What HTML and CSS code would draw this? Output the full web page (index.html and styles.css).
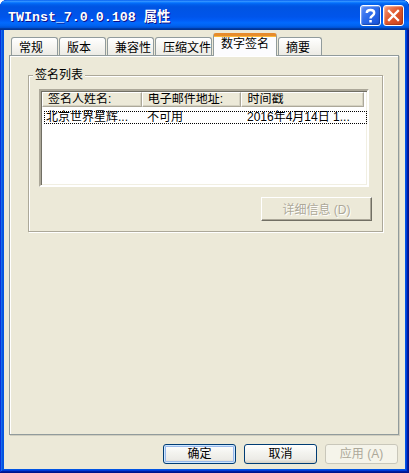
FILE: index.html
```html
<!DOCTYPE html>
<html lang="zh-CN">
<head>
<meta charset="utf-8">
<title>TWInst_7.0.0.108 属性</title>
<link rel="stylesheet" href="styles.css">
</head>
<body>
<div class="window">
  <div class="titlebar">
    <span class="title">TWInst_7.0.0.108 属性</span>
    <div class="tcontrols">
      <div class="tbtn help">
        <svg width="21" height="21" viewBox="0 0 21 21"><path d="M6.8 8 C6.8 4 14.2 4 14.2 8 C14.2 10.8 10.5 10.6 10.5 13.5" fill="none" stroke="#fff" stroke-width="2.4"/><rect x="9.3" y="15" width="2.5" height="2.5" fill="#fff"/></svg>
      </div>
      <div class="tbtn close">
        <svg width="21" height="21" viewBox="0 0 21 21"><path d="M6 6 L15 15 M15 6 L6 15" stroke="#fff" stroke-width="2.3" stroke-linecap="square"/></svg>
      </div>
    </div>
  </div>
  <div class="client">
    <div class="tabs">
      <div class="tab w47">常规</div>
      <div class="tab w47">版本</div>
      <div class="tab w47">兼容性</div>
      <div class="tab w57">压缩文件</div>
      <div class="tab sel">数字签名</div>
      <div class="tab w44">摘要</div>
    </div>
    <div class="panel">
      <div class="group">
        <span class="legend">签名列表</span>
        <div class="listview">
          <div class="lvhead">
            <div class="hcol c1">签名人姓名:</div>
            <div class="hcol c2">电子邮件地址:</div>
            <div class="hcol c3">时间戳</div>
          </div>
          <div class="lvrow">
            <span class="cell c1">北京世界星辉...</span>
            <span class="cell c2">不可用</span>
            <span class="cell c3">2016年4月14日 1...</span>
          </div>
        </div>
        <div class="grpbtns">
          <button class="cbtn" disabled>详细信息 (D)</button>
        </div>
      </div>
    </div>
    <div class="dlgbtns">
      <button class="xbtn default">确定</button>
      <button class="xbtn">取消</button>
      <button class="xbtn" disabled>应用 (A)</button>
    </div>
  </div>
</div>
</body>
</html>
```

FILE: styles.css
```css
* { box-sizing: border-box; }
html, body { margin: 0; padding: 0; }
body {
  width: 409px;
  height: 473px;
  overflow: hidden;
  font-family: "Liberation Sans", "Noto Sans CJK SC", sans-serif;
  font-size: 12px;
  color: #000;
}
.window {
  width: 409px;
  height: 473px;
  display: flex;
  flex-direction: column;
  background: #0054E3;
  box-shadow: inset -1px -1px #00138c, inset 1px 1px #0831d9, inset -2px -2px #001ea0, inset 2px 2px #166aee, inset -3px -3px #003bda, inset 3px 3px #0855dd;
  border-radius: 7px 7px 0 0;
  padding: 0 4px 4px 4px;
}
.titlebar {
  height: 30px;
  margin: 0 -4px;
  padding: 0 5px 0 8px;
  display: flex;
  align-items: center;
  justify-content: space-between;
  border-radius: 7px 7px 0 0;
  background: linear-gradient(to bottom, #0058EE 0%, #3593FF 4%, #288EFF 6%, #127DFF 8%, #036FFC 10%, #0262EE 14%, #0057E5 20%, #0054E3 24%, #0055EB 56%, #005BF5 66%, #026AFE 76%, #0062EF 86%, #0052D6 92%, #0040AB 94%, #003092 100%);
}
.title {
  color: #fff;
  font-family: "Liberation Mono", "Noto Sans CJK SC", monospace;
  font-weight: bold;
  font-size: 13.3px;
  text-shadow: 1px 1px #0F1089;
  margin-top: 1px;
}
.tcontrols { display: flex; gap: 2px; margin-top: 1px; }
.tbtn {
  width: 21px;
  height: 21px;
  border: 1px solid #fff;
  border-radius: 3px;
  display: flex;
  align-items: center;
  justify-content: center;
}
.tbtn svg { display: block; margin: -1px; }
.help {
  background: linear-gradient(135deg, #5D8DF5 0%, #2E6CEB 45%, #1450D8 100%);
  box-shadow: inset -1px -1px 1px rgba(0,0,0,0.25), inset 1px 1px 1px rgba(255,255,255,0.35);
}
.close {
  background: linear-gradient(135deg, #F49A7C 0%, #E25A2E 45%, #C8401C 100%);
  box-shadow: inset -1px -1px 1px rgba(0,0,0,0.2), inset 1px 1px 1px rgba(255,255,255,0.35);
}
.client {
  flex: 1;
  background: #ECE9D8;
  display: flex;
  flex-direction: column;
  padding: 3px 6px 0 5px;
}
.tabs {
  display: flex;
  align-items: flex-end;
  gap: 1px;
  padding-left: 2px;
  height: 22px;
  position: relative;
  z-index: 1;
}
.tab {
  height: 18px;
  border: 1px solid #919B9C;
  border-bottom: none;
  border-radius: 3px 3px 0 0;
  background: linear-gradient(to bottom, #FFFFFF 0%, #F6F5F1 50%, #ECEBE5 100%);
  padding: 3px 0 0 7px;
  line-height: 14px;
  white-space: nowrap;
}
.w47 { width: 47px; }
.w57 { width: 57px; }
.w44 { width: 44px; }
.tab.sel {
  width: 64px;
  height: 23px;
  margin-bottom: -1px;
  background: #FCFCFE;
  border-top: 3px solid #E68B2C;
  box-shadow: inset 0 1px 0 #F9B93C;
  padding: 1px 0 0 7px;
}
.panel {
  width: 390px;
  height: 380px;
  border: 1px solid #919B9C;
  background: #ECE9D8;
  box-shadow: inset 1px 1px 0 #fff, 1px 1px 0 #D0CEBF;
  padding: 19px 0 0 18px;
}
.group {
  width: 355px;
  height: 157px;
  border: 1px solid #ACA899;
  box-shadow: inset 1px 1px 0 #fff, 1px 1px 0 #fff;
  display: flex;
  flex-direction: column;
  padding: 0 0 0 10px;
}
.legend {
  align-self: flex-start;
  margin: -8px 0 0 -6px;
  padding: 0 2px 0 2px;
  background: #ECE9D8;
  line-height: 14px;
}
.listview {
  margin-top: 7px;
  width: 330px;
  height: 98px;
  background: #fff;
  border-style: solid;
  border-width: 2px;
  border-color: #ACA899 #fff #fff #ACA899;
  box-shadow: inset 1px 1px 0 #716F64, inset -1px -1px 0 #F1EFE2;
  padding: 1px 3px 0 1px;
}
.lvhead {
  display: flex;
  height: 15px;
}
.hcol {
  background: #ECE9D8;
  border-style: solid;
  border-width: 1px;
  border-color: #fff #ACA899 #ACA899 #fff;
  box-shadow: inset -1px -1px 0 #D5D2C2;
  line-height: 13px;
  padding-left: 5px;
  white-space: nowrap;
  overflow: hidden;
}
.c1 { width: 100px; }
.c2 { width: 100px; }
.c3 { width: 123px; }
.lvrow {
  margin: 4px 0 0 2px;
  width: 323px;
  height: 13px;
  border: 1px dotted #000;
  display: flex;
  line-height: 11px;
}
.cell { padding-left: 1px; white-space: nowrap; }
.lvrow .c1 { width: 101px; }
.lvrow .c2 { width: 100px; }
.lvrow .c3 { width: 120px; }
.grpbtns {
  display: flex;
  justify-content: flex-end;
  padding-right: 10px;
  margin-top: 10px;
}
.cbtn {
  width: 111px;
  height: 24px;
  font: inherit;
  color: #ACA899;
  background: #ECE9D8;
  border-style: solid;
  border-width: 1px;
  border-color: #fff #716F64 #716F64 #fff;
  box-shadow: inset -1px -1px 0 #ACA899;
  padding: 0 0 1px 0;
  text-shadow: 1px 1px 0 #fff;
}
.dlgbtns {
  display: flex;
  justify-content: flex-end;
  gap: 8px;
  margin-top: 9px;
  padding-right: 1px;
}
.xbtn {
  width: 73px;
  height: 20px;
  font: inherit;
  color: #000;
  border: 1px solid #003C74;
  border-radius: 3px;
  background: linear-gradient(to bottom, #FFFFFF 0%, #F4F4F0 40%, #ECEBE6 80%, #D6D0C5 100%);
  padding: 0;
  line-height: 16px;
}
.xbtn.default {
  box-shadow: inset 0 0 0 1px #CEE7FF, inset 0 0 0 2px #98B8EA;
}
.xbtn:disabled {
  border-color: #C9C7BA;
  background: #F5F4EA;
  color: #ACA899;
}
```
